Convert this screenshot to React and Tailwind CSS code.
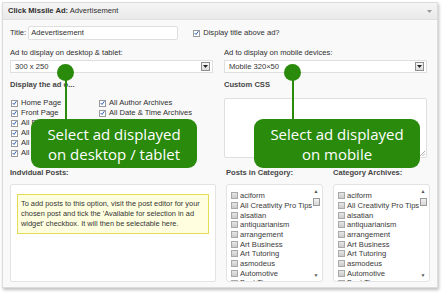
import React from 'react';

const font = { fontFamily: '"Liberation Sans", Arial, sans-serif' };

const Check = ({ checked }) => (
    <span className={`inline-flex w-[7px] h-[7px] shrink-0 items-center justify-center border ${checked ? 'border-[#9a9a9a] bg-white' : 'border-[#a9a9a9] bg-gradient-to-b from-[#e6e6e6] to-[#cbcbcb]'}`}>
        {checked && (
            <svg width="6" height="6" viewBox="0 0 6 6">
                <path d="M0.8 3 L2.4 4.8 L5.3 0.8" fill="none" stroke="#2f5fbf" strokeWidth="1.2" />
            </svg>
        )}
    </span>
);

const SelectBox = ({ value }) => (
    <div className="flex h-[13px] items-center justify-between border border-[#dfdfdf] bg-white pl-[4px] pr-[2px] text-[7.6px] text-[#333]">
        <span>{value}</span>
        <span className="flex h-[9px] w-[9px] items-center justify-center border border-[#8f8f8f] bg-gradient-to-b from-[#f7f7f7] to-[#dcdcdc]">
            <svg width="5" height="3" viewBox="0 0 5 3"><path d="M0 0 H5 L2.5 3 Z" fill="#222" /></svg>
        </span>
    </div>
);

const Pin = ({ x }) => (
    <div className="absolute top-[62px] flex flex-col items-center" style={{ left: x }}>
        <div className="h-[17px] w-[17px] rounded-full bg-[#2a8a0b]" />
        <div className="-mt-[2px] h-[40px] w-[2px] bg-[#2a8a0b]" />
    </div>
);

const Callout = ({ left, lines }) => (
    <div
        className={`absolute top-[117px] flex h-[49px] w-[166px] flex-col items-center justify-center rounded-[9px] bg-[#2a8a0b] text-[15px] leading-[20px] text-white ${left}`}
        style={{ fontFamily: '"Open Sans", "Noto Sans", sans-serif' }}
    >
        {lines.map(l => <span key={l}>{l}</span>)}
    </div>
);

const categories = ['aciform', 'All Creativity Pro Tips', 'alsatian', 'antiquarianism', 'arrangement', 'Art Business', 'Art Tutoring', 'asmodeus', 'Automotive', 'Best Tips'];

const CatList = () => (
    <div className="relative h-[98px] w-[97px] overflow-hidden rounded-[3px] border border-[#e3e3e3] bg-white">
        <div className="pl-[4px] pt-[6px]">
            {categories.map(c => (
                <div key={c} className="flex h-[9.7px] items-center gap-[2px] whitespace-nowrap text-[7.6px] text-[#3a3a3a]">
                    <Check />
                    <span>{c}</span>
                </div>
            ))}
        </div>
        <div className="absolute right-[2px] top-[3px] bottom-[3px] flex w-[8px] flex-col items-center justify-between bg-white">
            <span className="text-[5px] leading-[6px] text-[#555]">▲</span>
            <div className="absolute top-[10px] h-[8px] w-[7px] border border-[#9a9a9a] bg-gradient-to-b from-[#f2f2f2] to-[#d6d6d6]" />
            <span className="text-[5px] leading-[6px] text-[#555]">▼</span>
        </div>
    </div>
);

const App = () => {
    const leftChecks = ['Home Page', 'Front Page', 'All Posts', 'All Pages', 'All Categories', 'All Tags'];
    const rightChecks = ['All Author Archives', 'All Date & Time Archives', 'All Search Results', 'All 404 Pages', 'All Attachments', 'All Archives'];

    return (
        <div className="relative h-[294px] w-[443px] bg-white" style={font}>
            <div className="relative ml-[2px] mt-[2px] h-[286px] w-[436px] border border-[#dcdcdc] bg-[#f9f9f9] shadow-[1px_2px_3px_rgba(0,0,0,0.25)]">
                <div className="flex h-[17px] items-center justify-between border-b border-[#dfdfdf] bg-gradient-to-b from-[#f5f5f5] to-[#e9e9e9] pl-[5px] pr-[5px] text-[7.6px] text-[#2f2f2f]">
                    <span><b>Click Missile Ad:</b> Advertisement</span>
                    <svg width="5" height="3" viewBox="0 0 5 3"><path d="M0 0 H5 L2.5 3 Z" fill="#999" /></svg>
                </div>

                <div className="px-[7px] text-[7.6px] text-[#2f2f2f]">
                    <div className="mt-[6px] flex h-[14px] items-center">
                        <span className="mr-[2px]">Title:</span>
                        <div className="flex h-[14px] w-[150px] items-center rounded-[2px] border border-[#dfdfdf] bg-white pl-[2px]">Adevertisement</div>
                        <span className="ml-[15px] mr-[3px] flex"><Check checked /></span>
                        <span>Display title above ad?</span>
                    </div>

                    <div className="mt-[7px] flex gap-[11px]">
                        <div className="w-[203px]">
                            <div className="h-[11px] leading-[11px]">Ad to display on desktop &amp; tablet:</div>
                            <div className="mt-[2px]"><SelectBox value="300 x 250" /></div>
                        </div>
                        <div className="w-[203px]">
                            <div className="h-[11px] leading-[11px]">Ad to display on mobile devices:</div>
                            <div className="mt-[2px]"><SelectBox value="Mobile 320×50" /></div>
                        </div>
                    </div>

                    <div className="mt-[6px] flex gap-[11px]">
                        <div className="w-[203px]">
                            <div className="h-[11px] font-bold leading-[11px] text-[#464646]">Display the ad o...</div>
                            <div className="mt-[8px] flex">
                                <div className="w-[89px]">
                                    {leftChecks.map(c => (
                                        <div key={c} className="flex h-[10px] items-center gap-[3px] pl-[1px]"><Check checked /><span>{c}</span></div>
                                    ))}
                                </div>
                                <div>
                                    {rightChecks.map(c => (
                                        <div key={c} className="flex h-[10px] items-center gap-[3px]"><Check checked /><span>{c}</span></div>
                                    ))}
                                </div>
                            </div>
                        </div>
                        <div className="w-[203px]">
                            <div className="h-[11px] font-bold leading-[11px] text-[#464646]">Custom CSS</div>
                            <div className="relative mt-[8px] h-[60px] rounded-[2px] border border-[#dfdfdf] bg-white">
                                <svg className="absolute bottom-[1px] right-[1px]" width="5" height="5" viewBox="0 0 5 5">
                                    <path d="M5 0 L0 5 M5 2.5 L2.5 5" stroke="#999" strokeWidth="0.8" />
                                </svg>
                            </div>
                        </div>
                    </div>

                    <div className="mt-[9px] flex">
                        <div className="w-[206px]">
                            <div className="h-[11px] font-bold leading-[11px] text-[#464646]">Indvidual Posts:</div>
                            <div className="mt-[6px] h-[98px] rounded-[2px] border border-[#e3e3e3] bg-white px-[6px] pt-[9px]">
                                <div className="border border-[#e6db55] bg-[#ffffe0] px-[3px] py-[4px] text-[7.4px] leading-[10px] text-[#333]">
                                    To add posts to this option, visit the post editor for your chosen post and tick the 'Available for selection in ad widget' checkbox. It will then be selectable here.
                                </div>
                            </div>
                        </div>
                        <div className="ml-[10px] w-[97px]">
                            <div className="h-[11px] font-bold leading-[11px] text-[#464646]">Posts in Category:</div>
                            <div className="mt-[6px]"><CatList /></div>
                        </div>
                        <div className="ml-[10px] w-[97px]">
                            <div className="h-[11px] font-bold leading-[11px] text-[#464646]">Category Archives:</div>
                            <div className="mt-[6px]"><CatList /></div>
                        </div>
                    </div>
                </div>
            </div>

            <Pin x={57} />
            <Pin x={284} />
            <Callout left="left-[31px]" lines={['Select ad displayed', 'on desktop / tablet']} />
            <Callout left="left-[254px]" lines={['Select ad displayed', 'on mobile']} />
        </div>
    );
};

export default App;
